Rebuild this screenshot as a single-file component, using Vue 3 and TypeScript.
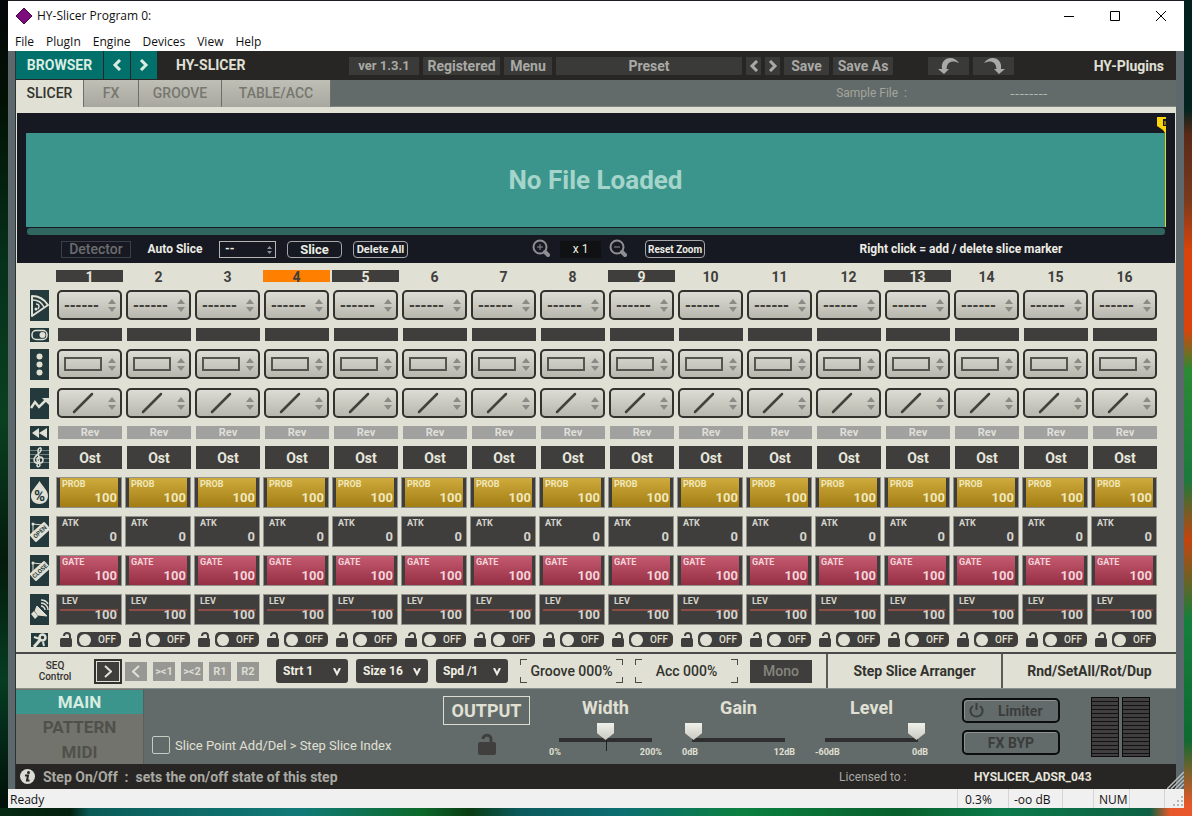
<script setup lang="ts">
import { ref } from 'vue'

interface ValueRow {
  id: string
  label: string
  value: string
  icon: string
}

const menus = ['File', 'PlugIn', 'Engine', 'Devices', 'View', 'Help']
const tabs = ['SLICER', 'FX', 'GROOVE', 'TABLE/ACC']
const activeTab = ref('SLICER')
const steps = Array.from({ length: 16 }, (_, i) => i + 1)
const currentStep = ref(4)
const valueRows: ValueRow[] = [
  { id: 'prob', label: 'PROB', value: '100', icon: 'drop' },
  { id: 'atk', label: 'ATK', value: '0', icon: 'open' },
  { id: 'gate', label: 'GATE', value: '100', icon: 'close' },
  { id: 'lev', label: 'LEV', value: '100', icon: 'speaker' },
]
const directions = ['><1', '><2', 'R1', 'R2']
const seqSelects = ['Strt 1', 'Size 16', 'Spd /1']
const modes = ['MAIN', 'PATTERN', 'MIDI']
const activeMode = ref('MAIN')
const sliders = [
  { name: 'Width', min: '0%', max: '200%', value: 50 },
  { name: 'Gain', min: '0dB', max: '12dB', value: 0 },
  { name: 'Level', min: '-60dB', max: '0dB', value: 100 },
]
</script>

<template>
  <div class="desktop">
    <div class="window">
      <header class="titlebar">
        <svg class="logo" width="18" height="18" viewBox="0 0 18 18">
          <path d="M9 1 17 9 9 17 1 9Z" fill="#7d0c7d" stroke="#3c0a46" stroke-width="1" />
        </svg>
        <span class="title">HY-Slicer Program 0:</span>
        <button class="winbtn" aria-label="Minimize"><svg width="12" height="12"><path d="M1 6.500H11" stroke="#000" /></svg></button>
        <button class="winbtn" aria-label="Maximize"><svg width="12" height="12"><path d="M1.500 1.500H10.500V10.500H1.500Z" stroke="#000" fill="none" /></svg></button>
        <button class="winbtn" aria-label="Close"><svg width="12" height="12"><path d="M1 1 11 11M11 1 1 11" stroke="#000" /></svg></button>
      </header>
      <nav class="menubar">
        <button v-for="m in menus" :key="m">{{ m }}</button>
      </nav>

      <main class="plugin">
        <div class="topbar">
          <button class="teal browser">BROWSER</button>
          <button class="teal" aria-label="Previous"><svg width="10" height="12"><path d="M8 1 3 6 8 11" class="chev" /></svg></button>
          <button class="teal" aria-label="Next"><svg width="10" height="12"><path d="M2 1 7 6 2 11" class="chev" /></svg></button>
          <h1>HY-SLICER</h1>
          <div class="tools">
            <span class="chip w70 ver">ver 1.3.1</span>
            <span class="chip w77">Registered</span>
            <button class="chip w48">Menu</button>
            <button class="chip preset">Preset</button>
            <button class="chip w15" aria-label="Previous preset"><svg width="10" height="12"><path d="M8 1 3 6 8 11" class="chev" /></svg></button>
            <button class="chip w15" aria-label="Next preset"><svg width="10" height="12"><path d="M2 1 7 6 2 11" class="chev" /></svg></button>
            <button class="chip w45">Save</button>
            <button class="chip w60">Save As</button>
            <button class="chip w41 undo" aria-label="Undo">
              <svg width="24" height="18" viewBox="0 0 24 18"><path d="M7 17 1 12H5C4 5 8 1 13 1 17 1 20 3 22 6 16 3 10 4 9.500 12H12Z" fill="currentColor" /></svg>
            </button>
            <button class="chip w41" aria-label="Redo">
              <svg width="24" height="18" viewBox="0 0 24 18"><path d="M17 17 23 12H19C20 5 16 1 11 1 7 1 4 3 2 6 8 3 14 4 14.500 12H12Z" fill="currentColor" /></svg>
            </button>
            <span class="brand">HY-Plugins</span>
          </div>
        </div>

        <div class="tabbar">
          <button v-for="t in tabs" :key="t" class="tab" :class="{ active: activeTab === t }" @click="activeTab = t">{{ t }}</button>
          <span class="sample">Sample File&nbsp; :</span>
          <span class="samplename">--------</span>
        </div>

        <section class="slicer">
          <div class="markerlane">
            <svg width="9" height="16" viewBox="0 0 9 16"><path d="M0 0H9V2H6V9H9V16H8L6 13 0 9Z" fill="#fbd50c" /><path d="M8 4V8" stroke="#fbd50c" stroke-width="1" /></svg>
          </div>
          <div class="wave">No File Loaded</div>
          <div class="scroll"></div>
          <div class="slicetools">
            <button class="detector">Detector</button>
            <label class="auto" for="auto">Auto Slice</label>
            <div class="autobox">
              <select id="auto"><option>--</option></select>
              <svg width="5" height="8" viewBox="0 0 5 8"><path d="M0 3 2.500 0 5 3ZM0 5 2.500 8 5 5Z" fill="#8d8f94" /></svg>
            </div>
            <button class="pill slice">Slice</button>
            <button class="pill del">Delete All</button>
            <i class="sp"></i>
            <button class="mag" aria-label="Zoom in">
              <svg width="20" height="20" viewBox="0 0 20 20"><circle cx="8" cy="8" r="6.500" class="ring" /><path d="M13 13 16 16" class="handle" /><path d="M5 8H11M8 5V11" class="sign" /></svg>
            </button>
            <span class="factor">x 1</span>
            <button class="mag" aria-label="Zoom out">
              <svg width="20" height="20" viewBox="0 0 20 20"><circle cx="8" cy="8" r="6.500" class="ring" /><path d="M13 13 16 16" class="handle" /><path d="M5 8H11" class="sign" /></svg>
            </button>
            <button class="pill reset">Reset Zoom</button>
            <i class="sp wider"></i>
            <span class="hint">Right click = add / delete slice marker</span>
          </div>
        </section>

        <section class="grid">
          <div class="row numbers">
            <span></span>
            <span v-for="n in steps" :key="n" class="num" :class="{ beat: n % 4 === 1, now: n === currentStep }">{{ n }}</span>
          </div>

          <div class="row tall">
            <svg class="ic" width="19" height="31" viewBox="0 0 19 31">
              <path d="M2 6V26L18 15C14 9 9 6 2 6Z" fill="none" stroke="#e0e0d4" stroke-width="2" stroke-linejoin="round" />
              <path d="M3 10C8 10 12 13 14 17" fill="none" stroke="#e0e0d4" stroke-width="1.500" />
              <path d="M6 14C9 14 10 16 8 19" fill="none" stroke="#e0e0d4" stroke-width="1.500" /><circle cx="6" cy="19" r="1.500" fill="#e0e0d4" />
            </svg>
            <div v-for="n in steps" :key="n" class="combo">
              <select :aria-label="'Slice ' + n"><option>------</option></select>
              <svg class="arrows" width="10" height="15" viewBox="0 0 10 15"><path d="M1 6 5 1 9 6ZM1 9 5 14 9 9Z" fill="#8b8b86" /></svg>
            </div>
          </div>

          <div class="row short">
            <svg class="ic" width="19" height="14" viewBox="0 0 19 14">
              <rect x="2" y="2.500" width="15" height="9" rx="4" fill="none" stroke="#e0e0d4" stroke-width="1.500" /><circle cx="12.500" cy="7" r="3" fill="#e0e0d4" />
            </svg>
            <button v-for="n in steps" :key="n" class="onoff" :aria-label="'Step ' + n"></button>
          </div>

          <div class="row tall g8">
            <svg class="ic" width="19" height="31" viewBox="0 0 19 31">
              <circle cx="9.500" cy="7.500" r="3" fill="#e0e0d4" /><circle cx="9.500" cy="15.500" r="3" fill="#e0e0d4" /><circle cx="9.500" cy="23.500" r="3" fill="#e0e0d4" />
            </svg>
            <button v-for="n in steps" :key="n" class="combo" :aria-label="'Shape ' + n">
              <svg width="38" height="14" viewBox="0 0 38 14"><rect x="1" y="1" width="36" height="12" fill="none" stroke="#55544e" stroke-width="2" /></svg>
              <svg class="arrows" width="10" height="15" viewBox="0 0 10 15"><path d="M1 6 5 1 9 6ZM1 9 5 14 9 9Z" fill="#8b8b86" /></svg>
            </button>
          </div>

          <div class="row tall">
            <svg class="ic" width="19" height="31" viewBox="0 0 19 31">
              <path d="M1 20 5 14 9 19 16 12" fill="none" stroke="#e0e0d4" stroke-width="2.500" /><path d="M12 10H19V17Z" fill="#e0e0d4" />
            </svg>
            <button v-for="n in steps" :key="n" class="combo" :aria-label="'Curve ' + n">
              <svg class="curve" width="22" height="22" viewBox="0 0 22 22"><path d="M2 20 20 2" stroke="#42413c" stroke-width="2.500" stroke-linecap="round" /></svg>
              <svg class="arrows" width="10" height="15" viewBox="0 0 10 15"><path d="M1 6 5 1 9 6ZM1 9 5 14 9 9Z" fill="#8b8b86" /></svg>
            </button>
          </div>

          <div class="row short g6">
            <svg class="ic" width="19" height="14" viewBox="0 0 19 14"><path d="M2 7 9 2V12ZM9 7 17 2V12Z" fill="#e0e0d4" /></svg>
            <button v-for="n in steps" :key="n" class="rev">Rev</button>
          </div>

          <div class="row mid">
            <svg class="ic" width="19" height="23" viewBox="0 0 19 23">
              <path d="M0 4.500H19M0 8.500H19M0 12.500H19M0 16.500H19" stroke="#71807d" stroke-width="1" />
              <path d="M10 20C7 22 6 19 8 18M10 20 8 5C8 1 12 1 11 4 11 8 4 9 4 14 5 19 13 18 13 14 13 10 7 10 7 14 7 15 8 16 9 16" fill="none" stroke="#e0e0d4" stroke-width="1.500" />
            </svg>
            <button v-for="n in steps" :key="n" class="ost">Ost</button>
          </div>

          <div v-for="r in valueRows" :key="r.id" class="row tall g8" :class="r.id">
            <svg class="ic" width="19" height="31" viewBox="0 0 19 31">
              <template v-if="r.icon === 'drop'">
                <path d="M9.500 4C12 9 18 13 18 19 18 24 14 27 9.500 27S1 24 1 19C1 13 7 9 9.500 4Z" fill="#e0e0d4" />
                <text x="9.500" y="24" text-anchor="middle" class="pct">%</text>
              </template>
              <template v-else-if="r.icon === 'speaker'">
                <path d="M7 12 17 22 8 21 5 17Z" fill="#e0e0d4" stroke="#e0e0d4" />
                <path d="M4 17 8 22 5 25 1 20Z" fill="#e0e0d4" />
                <path d="M11 12C13 12 15 14 15 16M11 9C15 9 18 12 18 16M11 6C14 6 17 8 18 10" fill="none" stroke="#e0e0d4" stroke-width="1.500" />
              </template>
              <template v-else>
                <path d="M3 18V8L12 9" fill="none" stroke="#e0e0d4" /><circle cx="3" cy="8" r="1.500" fill="#e0e0d4" />
                <g transform="rotate(-42 10 16)">
                  <rect x="0" y="11" width="20" height="10" rx="1" fill="#e0e0d4" />
                  <text x="10" y="18" text-anchor="middle" class="sign6">{{ r.icon.toUpperCase() }}</text>
                </g>
              </template>
            </svg>
            <label v-for="n in steps" :key="n" class="cell">
              <span>{{ r.label }}</span>
              <input type="text" :value="r.value" />
            </label>
          </div>

          <div class="row lockrow">
            <svg class="ic key" width="17" height="14" viewBox="0 0 17 14">
              <path d="M3 14 9 7" stroke="#e0e0d4" stroke-width="3" /><circle cx="11.500" cy="4.500" r="3" fill="none" stroke="#e0e0d4" stroke-width="2.500" /><path d="M3 4 9 6M12 9 13 13" stroke="#e0e0d4" stroke-width="2" />
            </svg>
            <div v-for="n in steps" :key="n" class="lockcell">
              <button :aria-label="'Lock ' + n">
                <svg width="13" height="15" viewBox="0 0 13 15"><rect x="0" y="6" width="12" height="9" rx="1.500" fill="#403e3c" /><path d="M4 4V4C4 0 10 0 10 4V8" fill="none" stroke="#403e3c" stroke-width="2" /></svg>
              </button>
              <label class="switch"><input type="checkbox" /><span>OFF</span></label>
            </div>
          </div>
        </section>

        <section class="seq">
          <div class="seqlabel">SEQ<br />Control</div>
          <button class="dir on" aria-label="Forward"><svg width="8" height="13"><path d="M1 1 7 6.500 1 12" class="thin" /></svg></button>
          <div class="dirs">
            <button class="dir" aria-label="Backward"><svg width="8" height="13"><path d="M7 1 1 6.500 7 12" class="thin" /></svg></button>
            <button v-for="d in directions" :key="d" class="dir">{{ d }}</button>
          </div>
          <div class="selects">
            <div v-for="s in seqSelects" :key="s" class="seqselect">
              <select :aria-label="s"><option>{{ s }}</option></select>
              <svg width="8" height="8" viewBox="0 0 8 8"><path d="M1 0 4 6 7 0" fill="none" stroke="#efefe4" stroke-width="2" /></svg>
            </div>
          </div>
          <button class="bracket">Groove 000%</button>
          <button class="bracket">Acc 000%</button>
          <button class="mono">Mono</button>
          <button class="wide">Step Slice Arranger</button>
          <button class="wide">Rnd/SetAll/Rot/Dup</button>
        </section>

        <section class="bottom">
          <div class="modes">
            <button v-for="m in modes" :key="m" :class="{ active: activeMode === m }" @click="activeMode = m">{{ m }}</button>
          </div>
          <label class="option"><input type="checkbox" />Slice Point Add/Del &gt; Step Slice Index</label>
          <div class="output">
            <h2>OUTPUT</h2>
            <button aria-label="Lock output">
              <svg width="18" height="23" viewBox="0 0 18 23"><rect x="0" y="9" width="18" height="13" rx="2" fill="#403f3d" /><path d="M5 6C5 1 13 1 13 6V10" fill="none" stroke="#403f3d" stroke-width="3" /></svg>
            </button>
          </div>
          <div class="sliders">
            <div v-for="s in sliders" :key="s.name" class="slider">
              <label :for="s.name">{{ s.name }}</label>
              <div class="track" :class="{ centered: s.value === 50 }"><input :id="s.name" type="range" min="0" max="100" :value="s.value" /></div>
              <div class="ends"><span>{{ s.min }}</span><span>{{ s.max }}</span></div>
            </div>
          </div>
          <div class="bypass">
            <button class="limiter">
              <svg width="15" height="15" viewBox="0 0 15 15"><path d="M4 3C-1 7 2 13.500 7.500 13.500S16 7 11 3M7.500 0V7" fill="none" stroke="#3b3d3c" stroke-width="2" /></svg>
              <span>Limiter</span>
            </button>
            <button>FX BYP</button>
          </div>
          <div class="meters"><i></i><i></i></div>
        </section>

        <footer class="info">
          <svg width="15" height="15" viewBox="0 0 15 15"><circle cx="7.500" cy="7.500" r="7.500" fill="#dcdcd6" /><circle cx="8.500" cy="3.500" r="1.500" fill="#272624" /><path d="M5 6.500H8L7 11.500H9.500" fill="none" stroke="#272624" stroke-width="2" /></svg>
          <span class="tip">Step On/Off&nbsp; :&nbsp; sets the on/off state of this step</span>
          <span class="lic">Licensed to :</span>
          <span class="who">HYSLICER_ADSR_043</span>
        </footer>
        <svg class="grip" width="17" height="18" viewBox="0 0 17 18"><path d="M0 18 17 1M4 18 17 5M8 18 17 9M12 18 17 13" stroke="#b9bfbe" stroke-width="1.500" /></svg>
      </main>

      <footer class="status">
        <span class="ready">Ready</span>
        <span class="s51">0.3%</span>
        <span class="s54">-oo dB</span>
        <span class="s31"></span>
        <span class="s36">NUM</span>
        <span class="s35"></span>
        <span class="s20"><svg width="11" height="11" viewBox="0 0 11 11"><path d="M8 0H10V2H8ZM4 4H6V6H4ZM8 4H10V6H8ZM0 8H2V10H0ZM4 8H6V10H4ZM8 8H10V10H8Z" fill="#b5b5b5" /></svg></span>
      </footer>
    </div>
  </div>
</template>

<style>
body {
  margin: 0;
}
</style>

<style scoped>
* {
  box-sizing: border-box;
}
.desktop {
  min-height: 100vh;
  padding: 1px 8px 8px;
  background:
    linear-gradient(90deg, #052a12 0, #04200e 70px, #0a5c58 90px, #117a78 300px, #0c6a2c 420px, #0a3c14 470px, #0b5a5c 520px, #0c6e72 620px, #0a8040 740px, #08602c 900px, #0b7a4a 1000px, #0d6044 1150px, #e8582a 1170px) bottom / 100% 8px no-repeat,
    linear-gradient(180deg, #03201c 0, #04241f 110px, #5a2a18 135px, #7a3a1c 200px, #d8440c 250px, #d8440c 330px, #2a8a34 370px, #1b7a3c 480px, #c4440e 540px, #14803c 620px, #0e6a30 740px, #e8582a 805px) right / 8px 100% no-repeat,
    linear-gradient(180deg, #05070a 0, #021004 100px, #06301a 260px, #0a4020 420px, #041a0c 560px, #063c22 680px, #02120a 800px) left / 8px 100% no-repeat,
    #1a1c22;
  font-family: Roboto, "Liberation Sans", sans-serif;
  font-size: 13px;
}
button,
input,
select {
  font: inherit;
  color: inherit;
  margin: 0;
  padding: 0;
  border: 0;
  border-radius: 0;
  background: none;
}
select {
  appearance: none;
  outline: none;
}
button {
  display: flex;
  align-items: center;
  justify-content: center;
  white-space: nowrap;
  flex: none;
}
svg {
  display: block;
  flex: none;
}
.window {
  display: flex;
  flex-direction: column;
  background: #fff;
}
.titlebar {
  display: flex;
  align-items: center;
  height: 29px;
  padding-left: 7px;
  font-family: "Open Sans", "Noto Sans", sans-serif;
  font-size: 12px;
  color: #111;
}
.title {
  flex: 1;
  margin-left: 4px;
}
.winbtn {
  width: 46px;
  height: 28px;
}
.menubar {
  display: flex;
  gap: 12px;
  height: 21px;
  padding: 1px 7px 0;
  font-family: "Open Sans", "Noto Sans", sans-serif;
  font-size: 12px;
  color: #111;
}
.plugin {
  position: relative;
  padding: 0 8px;
  background: linear-gradient(#2b3335, #2b3335) 7px 0 / 1px 100% no-repeat, #5c686c;
}
.topbar {
  display: flex;
  height: 29px;
  background: #272624;
  color: #e0e0d6;
  font-size: 14px;
  font-weight: 700;
}
.teal {
  width: 26px;
  height: 28px;
  margin-right: 1px;
  background: #02706b;
  color: #d9ece0;
}
.browser {
  width: 87px;
}
.chev {
  fill: none;
  stroke: currentColor;
  stroke-width: 3;
}
h1 {
  flex: none;
  width: 191px;
  margin: 0;
  padding-left: 18px;
  font-size: 14px;
  line-height: 29px;
}
.tools {
  display: flex;
  flex: 1;
  align-items: center;
  gap: 4px;
}
.chip {
  display: flex;
  align-items: center;
  justify-content: center;
  flex: none;
  height: 18px;
  background: #3a3a39;
  color: #a9a9a5;
}
.ver {
  font-size: 13px;
}
.w70 { width: 70px; }
.w77 { width: 77px; }
.w48 { width: 48px; }
.w15 { width: 15px; }
.w45 { width: 45px; }
.w60 { width: 60px; }
.w41 { width: 41px; }
.undo {
  margin-left: 31px;
}
.preset {
  flex: 1;
}
.brand {
  width: 158px;
  padding-right: 12px;
  text-align: right;
}
.tabbar {
  display: flex;
  align-items: center;
  height: 27px;
  background: #636b6a;
  border-bottom: 1px solid #7d8483;
}
.tab {
  height: 27px;
  padding: 0 19px;
  border-right: 1px solid #6d6f69;
  background: linear-gradient(#bfbfb6, #a8a8a0);
  color: #77776f;
  font-size: 14px;
  font-weight: 500;
}
.tab:nth-child(1) { width: 68px; padding: 0; }
.tab:nth-child(2) { width: 55px; }
.tab:nth-child(3) { width: 83px; padding: 0; }
.tab:nth-child(4) { width: 109px; }
.tab.active {
  background: #e0e0d4;
  color: #33332f;
}
.sample {
  flex: 1;
  text-align: right;
  color: #a3a69d;
  font-size: 12px;
  line-height: 24px;
}
.samplename {
  width: 269px;
  padding-left: 103px;
  color: #b7b9b0;
  font-family: "DejaVu Sans", sans-serif;
  font-size: 13px;
}
.slicer {
  padding: 4px 9px 0;
  border: solid #e0e0d4;
  border-width: 6px 1px 0;
  background: #171922;
  color: #ecece4;
  font-weight: 700;
}
.markerlane {
  display: flex;
  justify-content: flex-end;
  height: 16px;
}
.wave {
  display: grid;
  place-items: center;
  height: 94px;
  border-right: 1px solid #e0d828;
  background: #3b958d;
  color: #a5d5ca;
  font-size: 26px;
}
.scroll {
  height: 7px;
  margin: 1px 1px 0;
  border-radius: 3px;
  background: #2f6660;
}
.slicetools {
  display: flex;
  align-items: center;
  height: 28px;
  padding: 0 98px 0 35px;
  font-size: 12px;
}
.detector {
  width: 70px;
  height: 17px;
  border: 1px solid #3c3e45;
  color: #6b6c70;
  font-size: 14px;
  font-weight: 500;
}
.auto {
  width: 88px;
  text-align: center;
}
.autobox {
  position: relative;
  width: 57px;
  height: 17px;
  margin-right: 11px;
}
.autobox select {
  display: block;
  width: 100%;
  height: 100%;
  padding-left: 5px;
  border: 1px solid #b5b5b2;
}
.autobox svg {
  position: absolute;
  right: 4px;
  top: 5px;
}
.pill {
  height: 17px;
  border: 1px solid #a5a6a8;
  border-radius: 4px;
  font-size: 11px;
}
.slice {
  width: 55px;
  font-size: 13px;
}
.del {
  width: 55px;
  margin-left: 11px;
}
.reset {
  width: 60px;
  height: 18px;
  margin-left: 16px;
  font-size: 10px;
}
.sp {
  flex: 5;
}
.wider {
  flex: 6;
}
.mag {
  width: 20px;
}
.ring {
  fill: none;
  stroke: #8e8f92;
  stroke-width: 2;
}
.handle {
  fill: none;
  stroke: #8e8f92;
  stroke-width: 4;
  stroke-linecap: round;
}
.sign {
  stroke: #8e8f92;
  stroke-width: 1;
}
.factor {
  width: 41px;
  margin: 0 8px;
  background: #101113;
  line-height: 17px;
  text-align: center;
  font-weight: 400;
}
.hint {
  flex: none;
  width: 214px;
  text-align: center;
}
.grid {
  padding: 7px 18px 4px 14px;
  background: #e0e0d4;
}
.row {
  display: grid;
  grid-template-columns: 24px repeat(16, minmax(0, 1fr));
  column-gap: 2px;
  margin-bottom: 7px;
}
.g8 { margin-bottom: 8px; }
.g6 { margin-bottom: 6px; }
.tall { height: 31px; }
.short { height: 14px; }
.mid { height: 24px; }
.ic {
  background: #24393c;
}
.numbers {
  height: 12px;
  margin-bottom: 8px;
}
.num {
  height: 12px;
  color: #403e3c;
  font-size: 14px;
  font-weight: 700;
  line-height: 14px;
  text-align: center;
}
.beat {
  background: #403e3c;
  color: #e6e6dc;
}
.now {
  background: #ff8000;
}
.combo {
  position: relative;
  display: flex;
  align-items: center;
  justify-content: flex-start;
  height: 30px;
  margin: 0 1px;
  padding: 0 5px;
  border: 2px solid #33322f;
  border-radius: 5px;
  background: linear-gradient(#dcdcd4, #b7b7ae);
  color: #42413c;
}
.combo select {
  width: 100%;
  height: 100%;
  font-family: "DejaVu Sans", sans-serif;
  font-size: 14px;
  font-weight: 700;
}
.combo .curve {
  margin-left: 8px;
}
.combo .arrows {
  position: absolute;
  top: 6px;
  right: 3px;
}
.pct {
  fill: #24393c;
  font-size: 15px;
  font-weight: 700;
}
.sign6 {
  fill: #24393c;
  font-size: 6px;
  font-weight: 700;
}
.onoff,
.rev,
.ost {
  height: 13px;
  margin: 0 1px 0 2px;
  background: #403e3c;
}
.rev {
  background: #a1a1a0;
  color: #dfdfd8;
  font-size: 11px;
  font-weight: 700;
}
.ost {
  height: 23px;
  color: #e6e6dc;
  font-size: 14px;
  font-weight: 700;
}
.cell {
  display: flex;
  flex-direction: column;
  align-items: flex-end;
  height: 31px;
  margin-right: 1px;
  padding: 0 4px;
  border: 1px solid #92928d;
  background: #403e3c;
  color: #d4d4cc;
  font-weight: 700;
}
.cell span {
  align-self: flex-start;
  padding-left: 1px;
  font-size: 9px;
  line-height: 12px;
}
.cell input {
  width: 100%;
  height: 15px;
  text-align: right;
  font-size: 13px;
  line-height: 15px;
}
.prob .cell {
  background: linear-gradient(#cfaa3c, #a27d14) center / calc(100% - 6px) 100% no-repeat, #403e3c;
  color: #f0e8bc;
}
.gate .cell {
  background: linear-gradient(#c45a70, #962f44) center / calc(100% - 6px) 100% no-repeat, #403e3c;
  color: #f3d4d8;
}
.lev .cell {
  background: linear-gradient(#8c4d47, #8c4d47) center 14px / calc(100% - 6px) 2px no-repeat, #403e3c;
}
.lev {
  margin-bottom: 7px;
}
.lockrow {
  height: 16px;
  margin: 0;
}
.key {
  margin: 1px;
}
.lockcell {
  display: flex;
  justify-content: space-between;
  height: 15px;
  padding: 0 2px 0 4px;
}
.switch {
  display: flex;
  align-items: center;
  width: 44px;
  height: 15px;
  padding-left: 2px;
  border-radius: 5px;
  background: #403e3c;
  color: #e0e0d4;
  font-size: 10px;
  font-weight: 500;
}
.switch input {
  appearance: none;
  width: 12px;
  height: 12px;
  margin-right: 7px;
  border-radius: 6px;
  background: #e0e0d4;
}
.seq {
  display: flex;
  align-items: center;
  height: 37px;
  border-top: 2px solid #4a4a48;
  border-bottom: 1px solid #8b908d;
  background: #e0e0d4;
  color: #33332f;
  font-size: 14px;
}
.seqlabel {
  width: 78px;
  text-align: center;
  font-size: 10px;
  font-weight: 500;
  line-height: 11px;
}
.dirs {
  display: flex;
  gap: 6px;
  margin: 0 17px 0 3px;
}
.dir {
  width: 22px;
  height: 19px;
  background: #979794;
  color: #dcdcd2;
  font-size: 11px;
  font-weight: 700;
}
.dir.on {
  width: 28px;
  height: 25px;
  border: 2px solid #33322f;
  outline: 1px solid #e0e0d4;
  outline-offset: -3px;
  background: #403e3c;
}
.thin {
  fill: none;
  stroke: #e0e0d4;
  stroke-width: 2;
}
.selects {
  display: flex;
  gap: 8px;
}
.seqselect {
  position: relative;
}
.seqselect select {
  display: block;
  width: 72px;
  height: 24px;
  padding-left: 7px;
  border-radius: 3px;
  background: #403e3c;
  color: #efefe4;
  font-size: 12px;
  font-weight: 700;
}
.seqselect svg {
  position: absolute;
  right: 7px;
  top: 9px;
}
.bracket {
  width: 103px;
  height: 24px;
  margin-left: 12px;
  font-weight: 500;
  background:
    linear-gradient(#4a4a46, #4a4a46) 0 0 / 7px 1px,
    linear-gradient(#4a4a46, #4a4a46) 100% 0 / 7px 1px,
    linear-gradient(#4a4a46, #4a4a46) 0 100% / 7px 1px,
    linear-gradient(#4a4a46, #4a4a46) 100% 100% / 7px 1px,
    linear-gradient(#4a4a46, #4a4a46) 0 0 / 1px 6px,
    linear-gradient(#4a4a46, #4a4a46) 100% 0 / 1px 6px,
    linear-gradient(#4a4a46, #4a4a46) 0 100% / 1px 6px,
    linear-gradient(#4a4a46, #4a4a46) 100% 100% / 1px 6px;
  background-repeat: no-repeat;
}
.mono {
  width: 62px;
  height: 23px;
  margin: 0 14px 0 12px;
  background: #403e3c;
  color: #85857f;
  font-weight: 500;
}
.wide {
  flex: 1;
  height: 34px;
  border-left: 2px solid #5b5c59;
  font-weight: 700;
}
.bottom {
  display: flex;
  height: 75px;
  background: #636b6a;
  color: #e0e0d4;
}
.modes {
  width: 128px;
  padding-top: 1px;
  border-right: 1px solid #56605f;
  background: #73736d;
}
.modes button {
  width: 100%;
  height: 25px;
  color: #50504b;
  font-size: 17px;
  font-weight: 700;
}
.modes .active {
  height: 24px;
  background: #3b958d;
  color: #d8ece0;
}
.option {
  display: flex;
  align-items: center;
  gap: 5px;
  flex: 1;
  height: 20px;
  margin: 46px 0 0 8px;
  font-size: 13px;
}
.option input {
  appearance: none;
  width: 18px;
  height: 18px;
  border: 1px solid #c4cbc2;
  border-radius: 2px;
}
.output {
  width: 87px;
  padding-top: 7px;
}
h2 {
  margin: 0 0 8px;
  border: 1px solid #dcdcd0;
  font-size: 18px;
  line-height: 27px;
  text-align: center;
}
.output button {
  margin: 0 auto;
}
.sliders {
  display: flex;
  gap: 20px;
  margin: 9px 34px 0 19px;
}
.slider {
  width: 113px;
}
.slider label {
  display: block;
  font-size: 18px;
  font-weight: 700;
  line-height: 20px;
  text-align: center;
}
.track {
  position: relative;
  height: 20px;
  margin-top: 5px;
  padding: 0 3px;
  background: linear-gradient(#2e2f2e, #2e2f2e) center 15px / 93px 4px no-repeat;
}
.track input {
  display: block;
  width: 100%;
  height: 17px;
  appearance: none;
}
.track input::-webkit-slider-runnable-track {
  height: 17px;
}
.track input::-webkit-slider-thumb {
  appearance: none;
  width: 17px;
  height: 17px;
  background: linear-gradient(#f0f0ea, #c9c9c2);
  clip-path: polygon(0 0, 100% 0, 100% 60%, 50% 100%, 0 60%);
}
.centered::after {
  content: "";
  position: absolute;
  left: 50%;
  top: 17px;
  width: 1px;
  height: 11px;
  background: #222;
}
.ends {
  display: flex;
  justify-content: space-between;
  margin-top: 3px;
  font-size: 9px;
  font-weight: 700;
  line-height: 12px;
}
.bypass {
  width: 98px;
  padding-top: 9px;
}
.bypass button {
  width: 98px;
  height: 25px;
  margin-bottom: 7px;
  border: 2px solid #0c0d0d;
  border-radius: 5px;
  box-shadow: inset 1px 1px 0 #8c9492;
  color: #3b3d3c;
  font-size: 14px;
  font-weight: 700;
}
.bypass .limiter {
  justify-content: flex-start;
  gap: 14px;
  padding-left: 5px;
}
.meters {
  display: flex;
  gap: 3px;
  margin: 8px 26px 0 31px;
}
.meters i {
  width: 28px;
  height: 60px;
  border: 1px solid #0d0d0d;
  background: repeating-linear-gradient(#403e3f 0 3px, #121212 3px 4px);
}
.info {
  display: flex;
  align-items: center;
  height: 25px;
  padding-left: 4px;
  background: #272624;
  color: #a9a9a3;
}
.tip {
  flex: 1;
  margin-left: 8px;
  font-size: 14px;
  font-weight: 700;
}
.lic {
  width: 135px;
  font-size: 12px;
}
.who {
  width: 202px;
  color: #e4e4dc;
  font-size: 12px;
  font-weight: 700;
}
.grip {
  position: absolute;
  right: 0;
  bottom: 0;
}
.status {
  display: flex;
  height: 19px;
  background: #f0f0f0;
  color: #111;
  font-family: "Open Sans", "Noto Sans", sans-serif;
  font-size: 12px;
  line-height: 21px;
}
.status span {
  padding-left: 5px;
  border-left: 1px solid #d4d4d4;
}
.status .ready {
  flex: 1;
  padding-left: 2px;
  border: 0;
}
.s51 { width: 51px; }
.s54 { width: 54px; }
.s31 { width: 31px; }
.s36 { width: 36px; }
.s35 { width: 35px; }
.s20 { width: 20px; }
.status .s51 { padding-left: 7px; }
.status .s20 { padding: 7px 0 0 8px; }
</style>
